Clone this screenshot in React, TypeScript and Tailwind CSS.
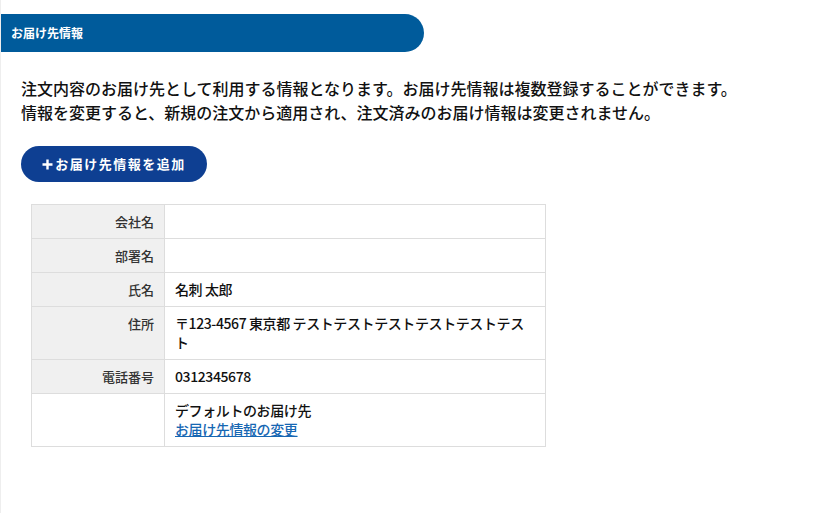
import React from "react";

const rows: { label: string; value: React.ReactNode }[] = [
  { label: "会社名", value: "" },
  { label: "部署名", value: "" },
  { label: "氏名", value: "名刺 太郎" },
  { label: "住所", value: "〒123-4567 東京都 テストテストテストテストテストテスト" },
  { label: "電話番号", value: "0312345678" },
];

export default function App() {
  return (
    <div
      className="min-h-[513px] w-[832px] border-l border-[#eeeeee] bg-white"
      style={{ fontFamily: '"Noto Sans CJK JP", "Noto Sans", sans-serif' }}
    >
      <div className="pt-[14px]">
        <div className="flex h-[38px] w-[423px] items-center rounded-r-full bg-[#005b9b] pl-[10px] text-[12px] font-bold text-white">
          お届け先情報
        </div>
      </div>
      <div className="pl-[20px] pt-[24px] text-[16px] font-medium leading-[24px] text-[#111111]">
        <p>注文内容のお届け先として利用する情報となります。お届け先情報は複数登録することができます。</p>
        <p>情報を変更すると、新規の注文から適用され、注文済みのお届け情報は変更されません。</p>
      </div>
      <div className="pl-[20px] pt-[22px]">
        <button className="flex h-[36px] w-[186px] items-center justify-center rounded-full bg-[#0e3f92] text-[13px] font-bold tracking-[1.5px] text-white">
          <svg width="11" height="11" viewBox="0 0 11 11" className="mr-[2px]">
            <path d="M5.5 0.5V10.5M0.5 5.5H10.5" stroke="white" strokeWidth="2.4" />
          </svg>
          お届け先情報を追加
        </button>
      </div>
      <div className="pl-[30px] pt-[22px]">
        <table className="w-[515px] border-collapse border border-[#dddddd] text-[13px]">
          <tbody>
            {rows.map((r) => (
              <tr key={r.label}>
                <th className="w-[133px] border border-[#dddddd] bg-[#f0f0f0] px-[10px] py-[7px] text-right align-top font-medium leading-[19px] text-[#333333]">
                  {r.label}
                </th>
                <td className="h-[33px] border border-[#dddddd] px-[10px] py-[7px] align-top text-[14px] font-medium leading-[19px] tracking-[-0.4px] text-[#111111]">
                  {r.value}
                </td>
              </tr>
            ))}
            <tr>
              <th className="w-[133px] border border-[#dddddd] bg-white px-[10px] py-[7px]"></th>
              <td className="border border-[#dddddd] px-[10px] py-[7px] text-[14px] font-medium leading-[19px] tracking-[-0.4px] text-[#111111]">
                <div>デフォルトのお届け先</div>
                <a href="#" className="text-[#1767b3] underline">
                  お届け先情報の変更
                </a>
              </td>
            </tr>
          </tbody>
        </table>
      </div>
    </div>
  );
}
